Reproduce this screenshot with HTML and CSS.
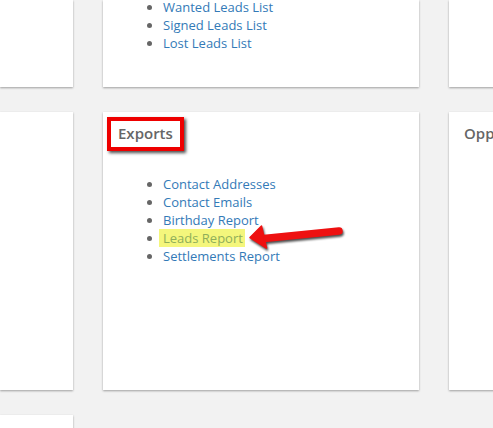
FILE: index.html
```html
<!DOCTYPE html>
<html lang="en">
<head>
<meta charset="utf-8">
<title>Reports</title>
<link rel="stylesheet" href="styles.css">
</head>
<body>
<div class="board">
  <div class="card card-short"></div>
  <div class="card card-short card-end">
    <ul class="links">
      <li><a href="#">Wanted Leads List</a></li>
      <li><a href="#">Signed Leads List</a></li>
      <li><a href="#">Lost Leads List</a></li>
    </ul>
  </div>
  <div class="card card-short"></div>

  <div class="card"></div>
  <div class="card card-annotated">
    <h3 class="card-title">Exports</h3>
    <ul class="links links-spaced">
      <li><a href="#">Contact Addresses</a></li>
      <li><a href="#">Contact Emails</a></li>
      <li><a href="#">Birthday Report</a></li>
      <li><a href="#" class="marked">Leads Report</a></li>
      <li><a href="#">Settlements Report</a></li>
    </ul>
    <div class="callout-box"></div>
    <svg class="callout-arrow" width="110" height="32" viewBox="0 0 110 32" aria-hidden="true">
      <line x1="21" y1="16.5" x2="96" y2="9" stroke="#ee1010" stroke-width="7.5" stroke-linecap="round"/>
      <polygon points="7,15.5 18.5,4 23.5,26" fill="#ee1010" stroke="#ee1010" stroke-width="1.5" stroke-linejoin="round"/>
    </svg>
  </div>
  <div class="card">
    <h3 class="card-title">Opportunities</h3>
  </div>

  <div class="card"></div>
</div>
</body>
</html>
```
FILE: styles.css
```css
html, body {
  margin: 0;
  padding: 0;
  background: #f2f2f2;
  overflow: hidden;
  height: 428px;
}

body {
  font-family: "Open Sans", "DejaVu Sans", sans-serif;
  font-size: 13px;
  color: #555;
}

.board {
  display: grid;
  grid-template-columns: 73px 316px 316px;
  grid-template-rows: 87px 278px 278px;
  column-gap: 30px;
  row-gap: 25px;
}

.card {
  background: #fff;
  box-shadow: 0 1px 2px rgba(0, 0, 0, 0.35);
  position: relative;
  padding: 10px 15px 0 15px;
  box-sizing: border-box;
  overflow: hidden;
}

.card-short {
  padding: 0 15px;
}

.card-end {
  display: flex;
  flex-direction: column;
  justify-content: flex-end;
  padding-bottom: 35px;
  overflow: visible;
}

.card-title {
  margin: 0;
  font-size: 15px;
  line-height: 22px;
  font-weight: 600;
  color: #666;
  white-space: nowrap;
}

.card-annotated .card-title {
  padding-left: 0;
}

.links {
  margin: 0;
  padding-left: 45px;
  list-style: disc;
  line-height: 18px;
}

.links li::marker {
  color: #666;
}

.links-spaced {
  margin-top: 31px;
}

.links a {
  color: #337ab7;
  text-decoration: none;
}

.links a.marked {
  color: #8fae5a;
  background: #f4f67c;
  margin-left: -4px;
  padding: 0 2px 0 4px;
}

.callout-box {
  position: absolute;
  left: 4px;
  top: 5px;
  width: 69px;
  height: 26px;
  border: 4px solid #ee0000;
  box-shadow: 2px 2px 3px rgba(0, 0, 0, 0.7);
}

.callout-arrow {
  position: absolute;
  left: 140px;
  top: 110px;
  filter: drop-shadow(1px 2px 1.2px rgba(0, 0, 0, 0.7));
  overflow: visible;
}
```
